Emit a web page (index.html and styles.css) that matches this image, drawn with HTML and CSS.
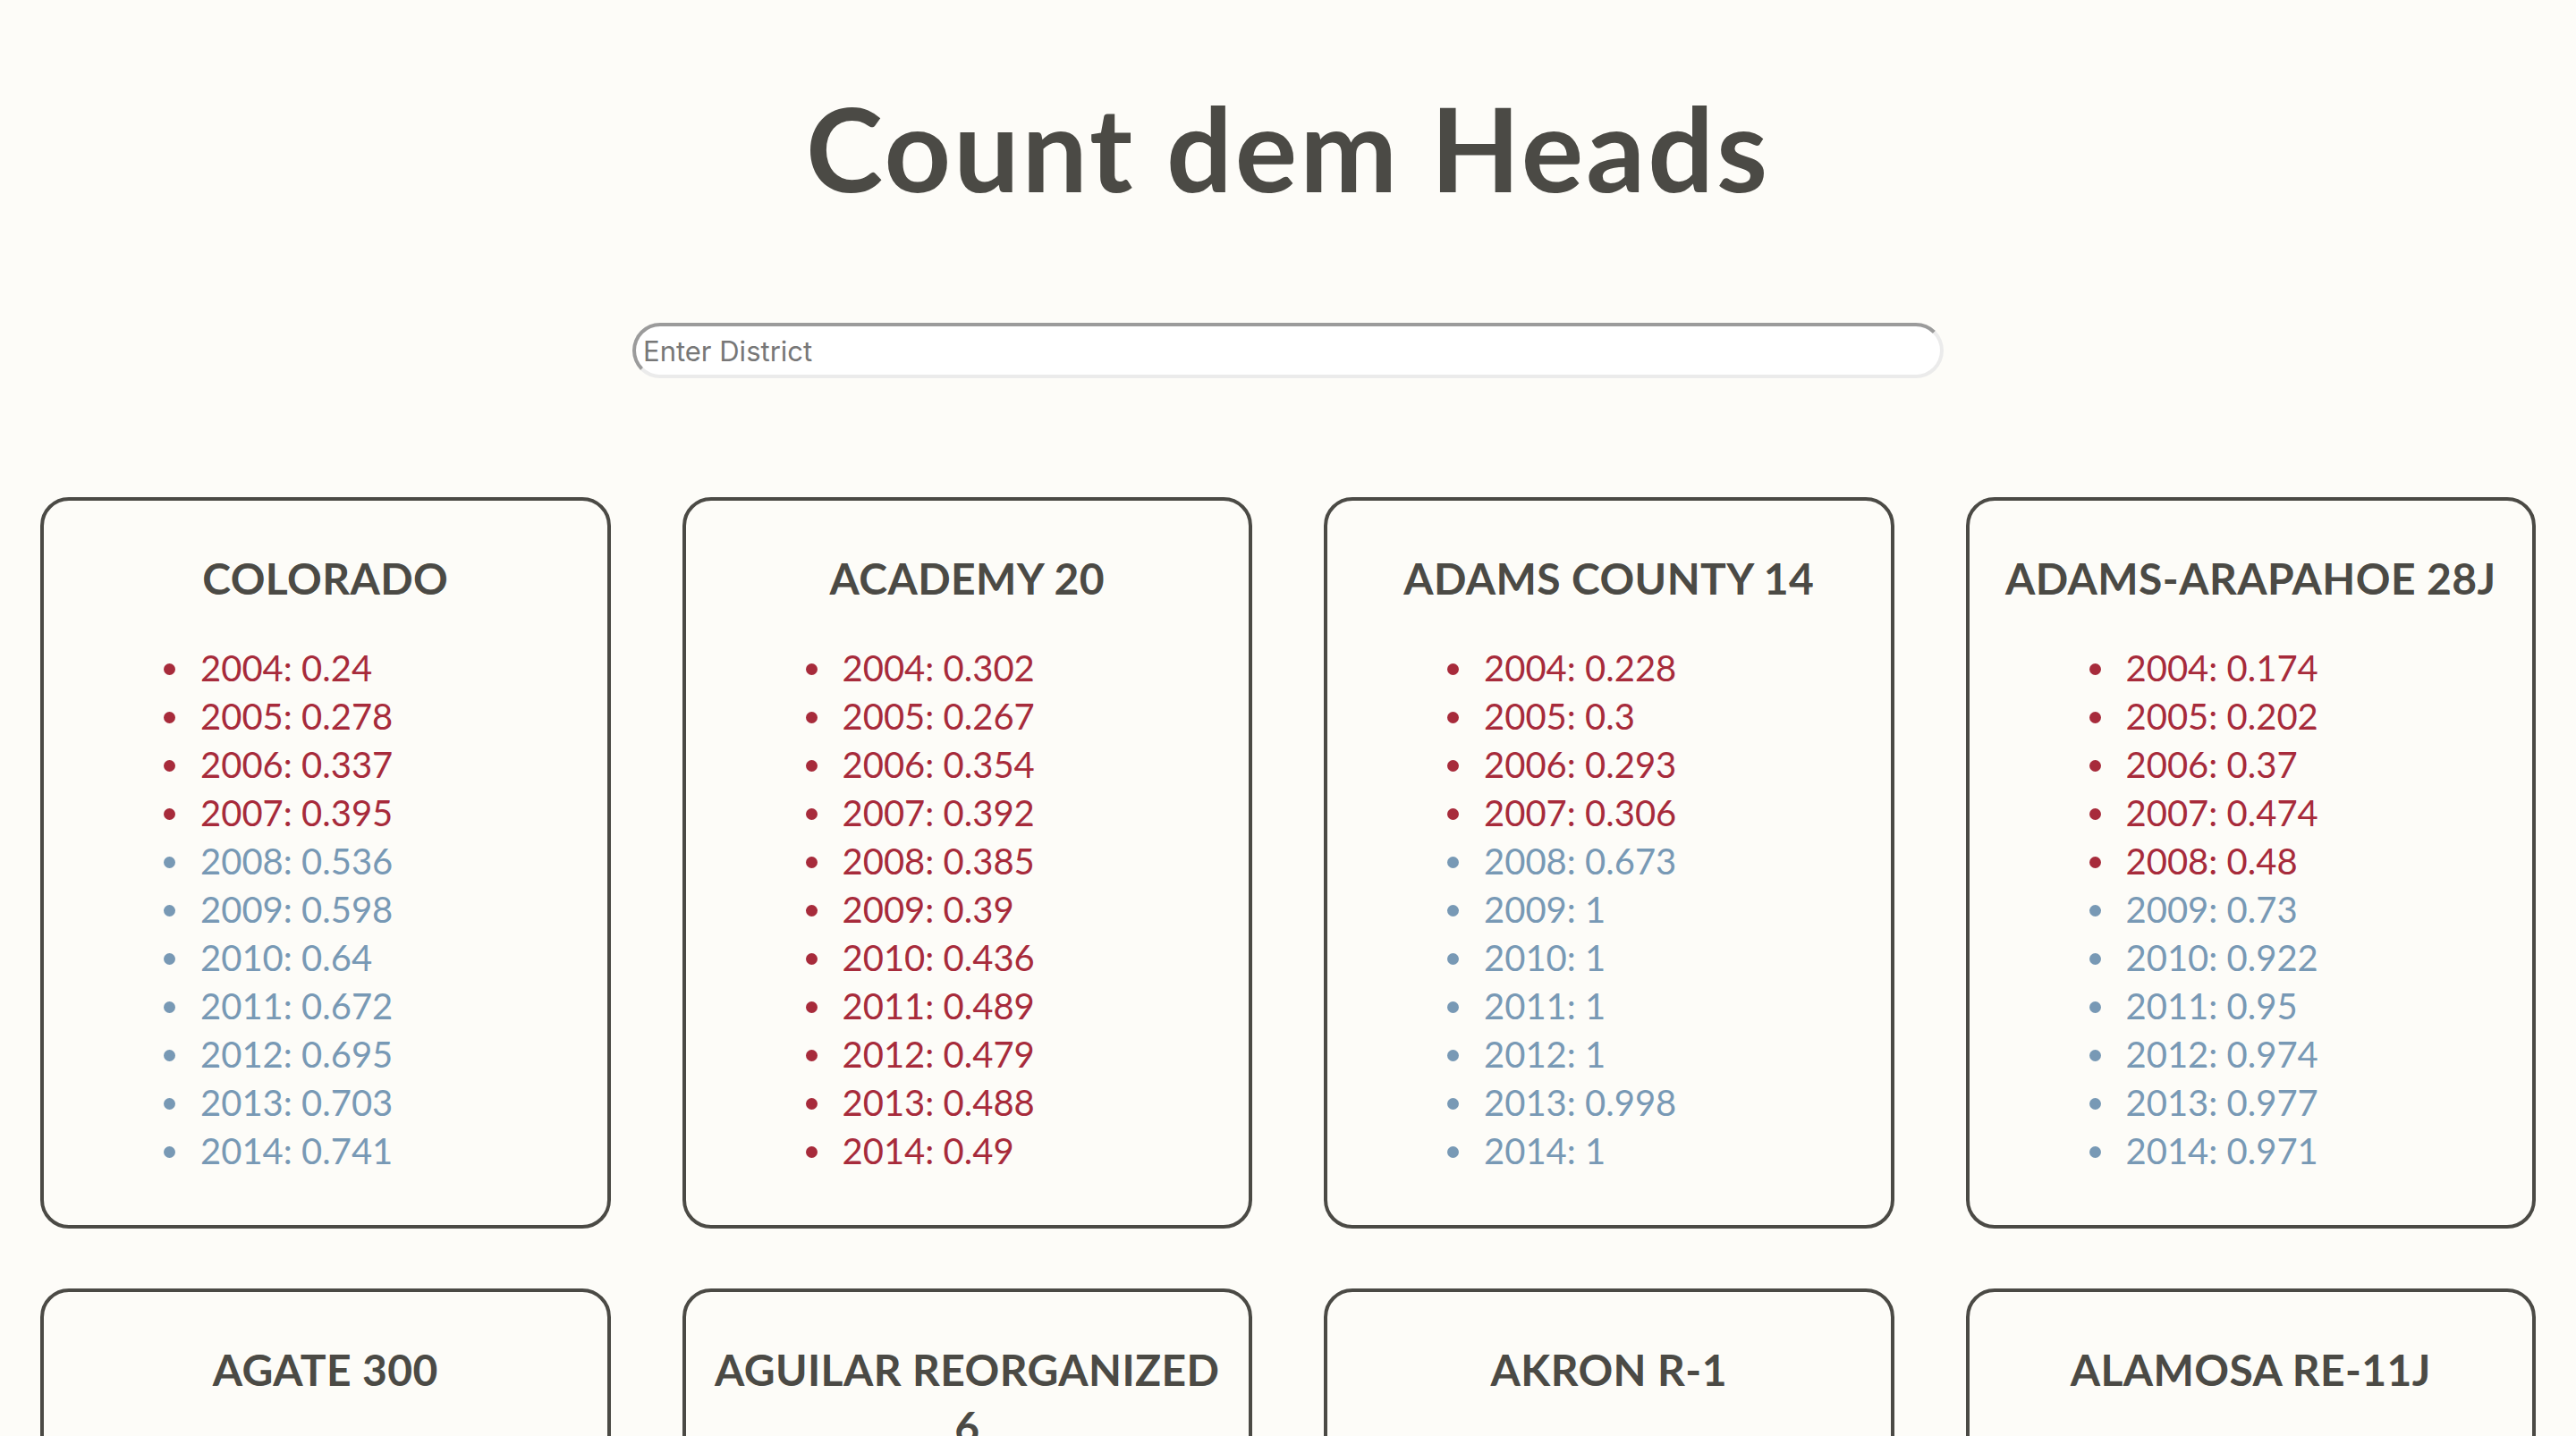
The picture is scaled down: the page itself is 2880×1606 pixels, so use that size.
FILE: index.html
```html
<!DOCTYPE html>
<html lang="en">
<head>
<meta charset="utf-8">
<title>Count dem Heads</title>
<link rel="stylesheet" href="styles.css">
</head>
<body>
<header class="masthead">
  <h1 class="title">Count dem Heads</h1>
  <input class="search" type="text" placeholder="Enter District">
</header>
<main class="grid">
  <section class="card">
    <h2 class="card-title">COLORADO</h2>
    <ul class="years">
      <li class="low">2004: 0.24</li>
      <li class="low">2005: 0.278</li>
      <li class="low">2006: 0.337</li>
      <li class="low">2007: 0.395</li>
      <li class="high">2008: 0.536</li>
      <li class="high">2009: 0.598</li>
      <li class="high">2010: 0.64</li>
      <li class="high">2011: 0.672</li>
      <li class="high">2012: 0.695</li>
      <li class="high">2013: 0.703</li>
      <li class="high">2014: 0.741</li>
    </ul>
  </section>
  <section class="card">
    <h2 class="card-title">ACADEMY 20</h2>
    <ul class="years">
      <li class="low">2004: 0.302</li>
      <li class="low">2005: 0.267</li>
      <li class="low">2006: 0.354</li>
      <li class="low">2007: 0.392</li>
      <li class="low">2008: 0.385</li>
      <li class="low">2009: 0.39</li>
      <li class="low">2010: 0.436</li>
      <li class="low">2011: 0.489</li>
      <li class="low">2012: 0.479</li>
      <li class="low">2013: 0.488</li>
      <li class="low">2014: 0.49</li>
    </ul>
  </section>
  <section class="card">
    <h2 class="card-title">ADAMS COUNTY 14</h2>
    <ul class="years">
      <li class="low">2004: 0.228</li>
      <li class="low">2005: 0.3</li>
      <li class="low">2006: 0.293</li>
      <li class="low">2007: 0.306</li>
      <li class="high">2008: 0.673</li>
      <li class="high">2009: 1</li>
      <li class="high">2010: 1</li>
      <li class="high">2011: 1</li>
      <li class="high">2012: 1</li>
      <li class="high">2013: 0.998</li>
      <li class="high">2014: 1</li>
    </ul>
  </section>
  <section class="card">
    <h2 class="card-title">ADAMS-ARAPAHOE 28J</h2>
    <ul class="years">
      <li class="low">2004: 0.174</li>
      <li class="low">2005: 0.202</li>
      <li class="low">2006: 0.37</li>
      <li class="low">2007: 0.474</li>
      <li class="low">2008: 0.48</li>
      <li class="high">2009: 0.73</li>
      <li class="high">2010: 0.922</li>
      <li class="high">2011: 0.95</li>
      <li class="high">2012: 0.974</li>
      <li class="high">2013: 0.977</li>
      <li class="high">2014: 0.971</li>
    </ul>
  </section>
  <section class="card">
    <h2 class="card-title">AGATE 300</h2>
    <ul class="years">
      <li class="high">2004: 1</li>
      <li class="high">2005: 1</li>
      <li class="high">2006: 1</li>
      <li class="high">2007: 1</li>
      <li class="high">2008: 1</li>
      <li class="high">2009: 1</li>
      <li class="high">2010: 1</li>
      <li class="high">2011: 1</li>
      <li class="high">2012: 1</li>
      <li class="high">2013: 1</li>
      <li class="high">2014: 1</li>
    </ul>
  </section>
  <section class="card">
    <h2 class="card-title">AGUILAR REORGANIZED 6</h2>
    <ul class="years">
      <li class="high">2004: 1</li>
      <li class="high">2005: 1</li>
      <li class="high">2006: 1</li>
      <li class="high">2007: 1</li>
      <li class="high">2008: 1</li>
      <li class="high">2009: 1</li>
      <li class="high">2010: 1</li>
      <li class="high">2011: 1</li>
      <li class="high">2012: 1</li>
      <li class="high">2013: 1</li>
      <li class="high">2014: 1</li>
    </ul>
  </section>
  <section class="card">
    <h2 class="card-title">AKRON R-1</h2>
    <ul class="years">
      <li class="high">2004: 1</li>
      <li class="high">2005: 1</li>
      <li class="high">2006: 1</li>
      <li class="high">2007: 1</li>
      <li class="high">2008: 1</li>
      <li class="high">2009: 1</li>
      <li class="high">2010: 1</li>
      <li class="high">2011: 1</li>
      <li class="high">2012: 1</li>
      <li class="high">2013: 1</li>
      <li class="high">2014: 1</li>
    </ul>
  </section>
  <section class="card">
    <h2 class="card-title">ALAMOSA RE-11J</h2>
    <ul class="years">
      <li class="high">2004: 1</li>
      <li class="high">2005: 1</li>
      <li class="high">2006: 1</li>
      <li class="high">2007: 1</li>
      <li class="high">2008: 1</li>
      <li class="high">2009: 1</li>
      <li class="high">2010: 1</li>
      <li class="high">2011: 1</li>
      <li class="high">2012: 1</li>
      <li class="high">2013: 1</li>
      <li class="high">2014: 1</li>
    </ul>
  </section>
</main>
</body>
</html>
```
FILE: styles.css
```css
html, body {
  margin: 0;
  padding: 0;
  background: #fdfcf8;
}

body {
  font-family: Lato, "Noto Sans", sans-serif;
  color: #4b4a45;
}

.masthead {
  display: flex;
  flex-direction: column;
  align-items: center;
  padding-top: 87px;
}

.title {
  margin: 0;
  font-size: 130px;
  line-height: 156px;
  font-weight: 700;
  color: #4b4a45;
  letter-spacing: 3px;
}

.search {
  box-sizing: border-box;
  margin-top: 118px;
  width: 1466px;
  height: 62px;
  padding: 0 8px;
  border-style: solid;
  border-width: 4px;
  border-color: #9b9b9b #ebebeb #ebebeb #9b9b9b;
  border-radius: 31px;
  background: #ffffff;
  font-family: Inter, "Liberation Sans", sans-serif;
  font-size: 31px;
  color: #333;
  outline: none;
}

.search::placeholder {
  color: #777777;
}

.grid {
  display: grid;
  grid-template-columns: repeat(4, 1fr);
  column-gap: 80px;
  row-gap: 67px;
  padding: 0 45px;
  margin-top: 133px;
}

.card {
  border: 4px solid #4b4a45;
  border-radius: 32px;
  padding: 55px 0 56px;
}

.card-title {
  margin: 0 0 41px;
  padding: 0 24px;
  text-align: center;
  font-size: 48px;
  line-height: 64px;
  font-weight: 700;
  letter-spacing: 0.4px;
  color: #4b4a45;
}

.years {
  list-style: none;
  margin: 0;
  padding: 0 0 0 175px;
}

.years li {
  font-size: 40px;
  line-height: 54px;
}

.years li::before {
  content: "";
  display: inline-block;
  width: 13px;
  height: 13px;
  border-radius: 50%;
  background: currentColor;
  margin-left: -41px;
  margin-right: 28px;
  vertical-align: 7px;
}

.years .low {
  color: #a72b3b;
}

.years .high {
  color: #7899b5;
}
```
